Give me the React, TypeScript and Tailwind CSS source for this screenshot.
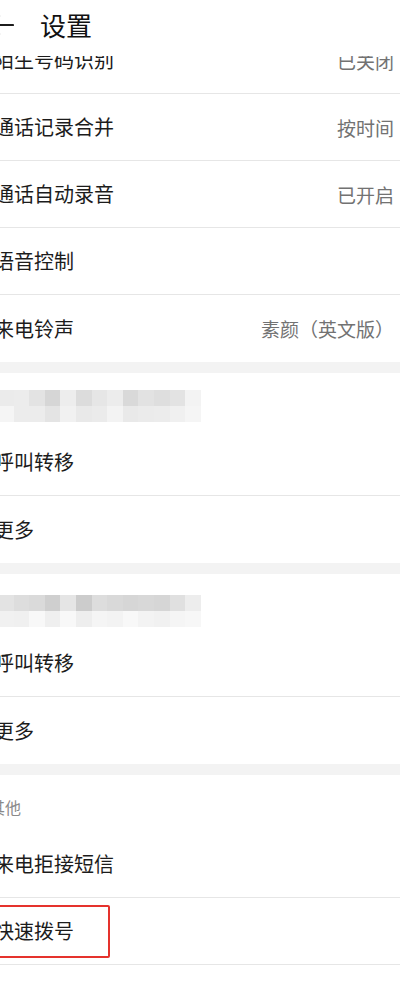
import React from "react";

const FONT = { fontFamily: '"Noto Sans CJK SC", "Noto Sans", sans-serif' };

const mosaicA: [string[], string[]] = [
  ["#ebebeb", "#ececec", "#e3e3e3", "#d6d6d6", "#ededed", "#dcdcdc", "#e6e6e6", "#ececec", "#d9d9d9", "#e2e2e2", "#dedede", "#e3e3e3", "#f3f3f3"],
  ["#f5f5f5", "#ececec", "#ececec", "#e4e4e4", "#f1f1f1", "#e9e9e9", "#ebebeb", "#f3f3f3", "#e9e9e9", "#ebebeb", "#ececec", "#f0f0f0", "#f5f5f5"],
];
const mosaicB: [string[], string[]] = [
  ["#e3e3e3", "#dddddd", "#dadada", "#cfcfcf", "#e5e5e5", "#cccccc", "#dddddd", "#d9d9d9", "#d6d6d6", "#d8d8d8", "#d6d6d6", "#e0e0e0", "#ededed"],
  ["#f1f1f1", "#f0f0f0", "#f8f8f8", "#efefef", "#f8f8f8", "#eeeeee", "#f5f5f5", "#f3f3f3", "#f8f8f8", "#f3f3f3", "#f1f1f1", "#f5f5f5", "#f7f7f7"],
];

function Mosaic({ rows }: { rows: [string[], string[]] }) {
  return (
    <div className="flex flex-col ml-[18px] w-[203px]">
      {rows.map((r, i) => (
        <div key={i} className="flex h-[16px]">
          {r.map((c, j) => (
            <div key={j} className="h-[16px] w-[15.6px] shrink-0" style={{ backgroundColor: c }} />
          ))}
        </div>
      ))}
    </div>
  );
}

function Row({
  label,
  value,
  border = true,
  children,
}: {
  label: string;
  value?: string;
  border?: boolean;
  children?: React.ReactNode;
}) {
  return (
    <div
      className={`relative flex h-[67px] items-center justify-between bg-white pl-[14px] pr-[6px] ${
        border ? "border-b border-[#e6e6e6]" : ""
      }`}
    >
      <span className="text-[20px] leading-none text-[#1c1c1c]">{label}</span>
      {value && <span className="text-[19px] leading-none text-[#727272]">{value}</span>}
      {children}
    </div>
  );
}

function Gap() {
  return <div className="h-[11px] bg-[#f3f3f3]" />;
}

export default function App() {
  return (
    <div className="w-[400px] h-[983px] overflow-hidden bg-white" style={FONT}>
      <div className="relative w-[420px] -ml-[20px] h-[983px] bg-white">
        {/* header overlaying scrolled content */}
        <div className="absolute left-0 top-0 z-10 h-[56px] w-full bg-white">
          <div className="flex h-[50px] items-center">
            <svg
              className="ml-[8px] shrink-0"
              width="26"
              height="26"
              viewBox="0 0 26 26"
              fill="none"
              stroke="#1c1c1c"
              strokeWidth="2.2"
              strokeLinecap="round"
              strokeLinejoin="round"
            >
              <path d="M2 13 H25" />
              <path d="M11 4 L2 13 L11 22" />
            </svg>
            <span className="ml-[26px] text-[26px] leading-none text-[#111111]">设置</span>
          </div>
        </div>

        <div className="pt-[27px]">
          <Row label="陌生号码识别" value="已关闭" />
          <Row label="通话记录合并" value="按时间" />
          <Row label="通话自动录音" value="已开启" />
          <Row label="语音控制" />
          <Row label="来电铃声" value="素颜（英文版）" border={false} />
          <Gap />
          <div className="h-[56px] bg-white pt-[17px]">
            <Mosaic rows={mosaicA} />
          </div>
          <Row label="呼叫转移" />
          <Row label="更多" border={false} />
          <Gap />
          <div className="h-[56px] bg-white pt-[21px]">
            <Mosaic rows={mosaicB} />
          </div>
          <Row label="呼叫转移" />
          <Row label="更多" border={false} />
          <Gap />
          <div className="flex h-[56px] items-start bg-white pl-[9px] pt-[23px]">
            <span className="text-[16px] leading-[18px] text-[#8a8a8a]">其他</span>
          </div>
          <Row label="来电拒接短信" />
          <Row label="快速拨号">
            <div className="pointer-events-none absolute left-[8px] top-[7px] h-[53px] w-[122px] rounded-[2px] border-2 border-[#e5322d]" />
          </Row>
        </div>
      </div>
    </div>
  );
}
